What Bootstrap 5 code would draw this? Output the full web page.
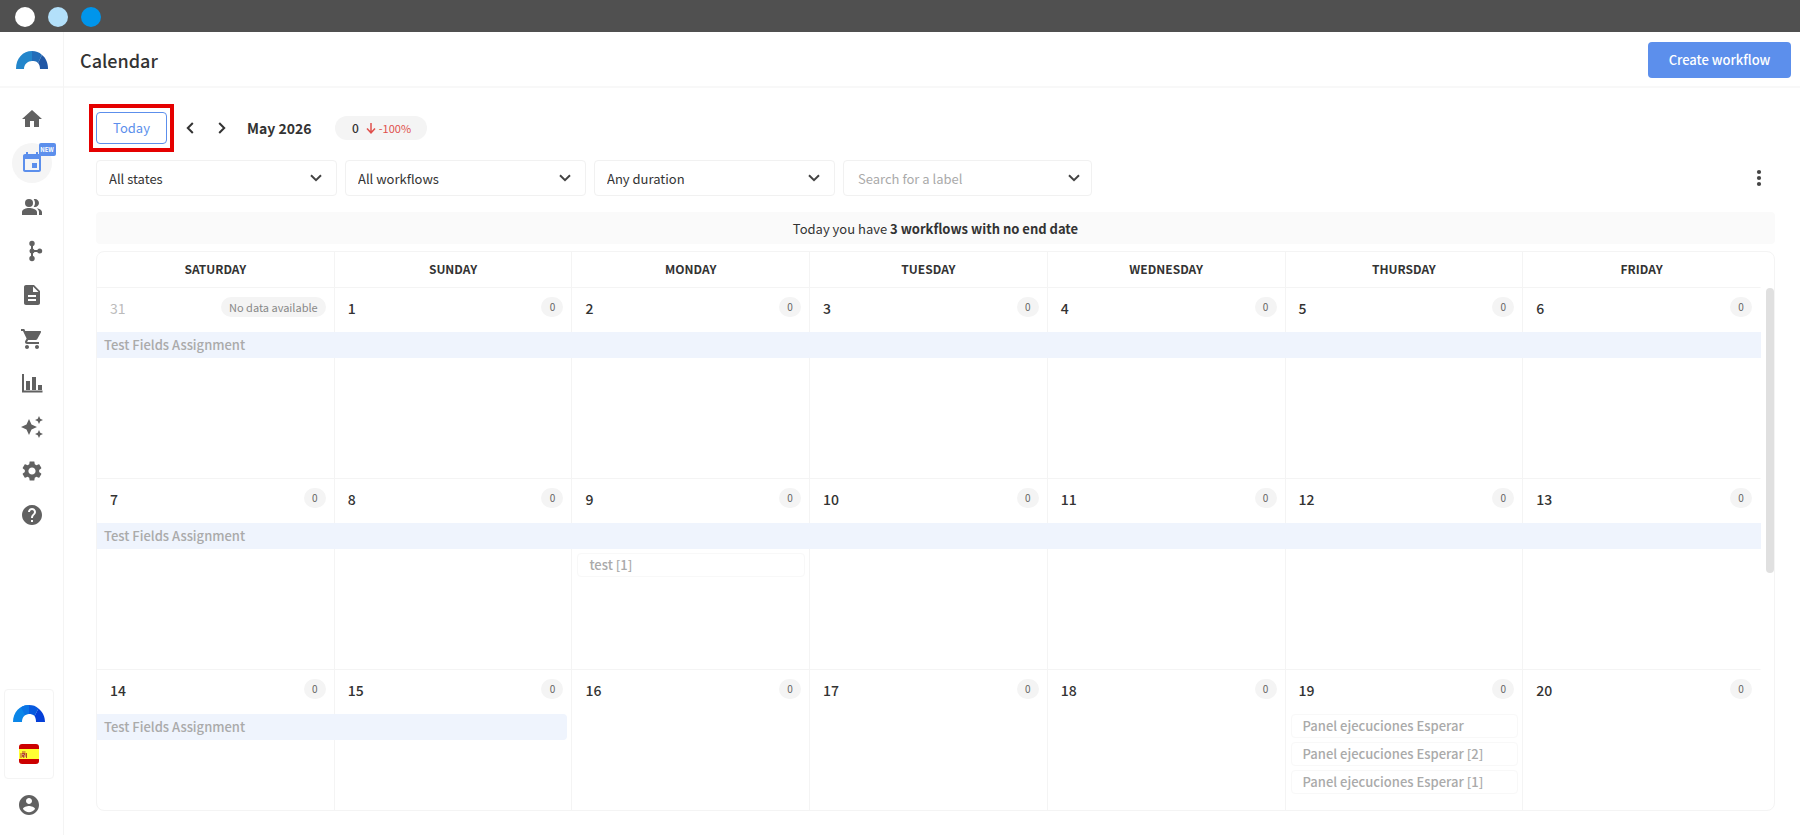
<!DOCTYPE html>
<html lang="en">
<head>
<meta charset="utf-8">
<meta name="viewport" content="width=device-width, initial-scale=1">
<title>Calendar</title>
<link rel="stylesheet" href="https://cdn.jsdelivr.net/npm/bootstrap@5.3.0/dist/css/bootstrap.min.css">
<style>
  :root { --line: #f4f4f4; --ink: #333; --brand: #5c8fec; --icon: #616161; }
  body { font-family: "Noto Sans CJK SC", "Noto Sans", sans-serif; font-size: 13px; line-height: 20px; color: var(--ink); background: #fff; }
  .window-bar { height: 32px; padding: 2px 0 0 15px; gap: 13px; background: #505050; }
  .dot { width: 20px; height: 20px; }
  .dot-white { background: #fff; }
  .dot-pale { background: #b3e0fa; }
  .dot-blue { background: #0095eb; }
  .side { width: 64px; border-right: 1px solid var(--line); }
  .side-logo { height: 56px; padding-top: 2px; border-bottom: 2px solid #f8f8f8; }
  .side-nav { padding-top: 11px; gap: 4px; }
  .side-link { width: 40px; height: 40px; color: var(--icon); }
  .side-link.active { color: var(--brand); background: #f5f5f5; }
  .tag-new { left: 27px; top: 0; width: 17px; height: 13px; border-radius: 2px; background: var(--brand); color: #fff; font-size: 6px; font-weight: 700; line-height: 13px; text-align: center; }
  .side-foot { padding: 0 10px 18px 4px; gap: 14px; }
  .locale { width: 50px; height: 90px; border: 1px solid var(--line); border-radius: 4px; padding-top: 15px; gap: 22px; }
  .account { color: var(--icon); }
  .topbar { height: 56px; border-bottom: 2px solid #f8f8f8; padding: 2px 9px 0 16px; }
  .page-title { font-size: 18px; line-height: 24px; font-weight: 500; }
  .btn-create { height: 36px; width: 143px; padding: 0; border-radius: 4px; font-size: 13px; font-weight: 500; color: #fff; background: var(--brand); }
  .content { padding: 16px 25px 24px; }
  .toolbar { height: 48px; }
  .highlight { border: 4px solid #e50000; padding: 4px 3px; }
  .btn-today { width: 71px; height: 32px; padding: 0; border: 1px solid var(--brand); border-radius: 4px; color: var(--brand); font-size: 13px; background: #fff; }
  .btn-step { width: 32px; height: 32px; padding: 0; border: 0; color: var(--ink); }
  .month { font-size: 14px; font-weight: 700; margin: 0 24px 0 9px; }
  .trend { height: 24px; width: 92px; border-radius: 12px; background: #f4f4f4; font-size: 12px; font-weight: 500; gap: 3px; }
  .trend-down { color: #e0504c; font-size: 11px; font-weight: 400; }
  .filters { margin: 8px 0 0 7px; gap: 8px; }
  .filter { width: 241px; height: 36px; padding: 2px 32px 0 12px; border: 1px solid #f1f1f1; border-radius: 4px; font-size: 13px; line-height: 20px; color: var(--ink);
    background: #fff url("data:image/svg+xml,%3Csvg xmlns='http://www.w3.org/2000/svg' viewBox='0 0 12 8'%3E%3Cpath d='M1 1.2l5 5 5-5' fill='none' stroke='%23444' stroke-width='2'/%3E%3C/svg%3E") no-repeat right 14px center / 12px 8px; }
  .filter-label { width: 249px; padding: 0 32px 0 14px; background-position: right 11px center; }
  .filter::placeholder { color: #aaa; opacity: 1; }
  .btn-more { width: 32px; height: 36px; padding: 0; border: 0; color: #444; }
  .notice { margin: 16px 0 7px 7px; height: 32px; line-height: 34px; border-radius: 4px; background: #fafafa; }
  .calendar { margin-left: 7px; border: 1px solid var(--line); border-radius: 8px; padding-right: 13px; min-height: 0; }
  .month-grid { table-layout: fixed; border-collapse: separate; border-spacing: 0; }
  .month-grid th, .month-grid td { border-bottom: 1px solid var(--line); border-right: 1px solid var(--line); padding: 0; vertical-align: top; }
  .month-grid th:last-child, .month-grid td:last-child { border-right-color: transparent; }
  .month-grid th { height: 36px; line-height: 34px; font-weight: 700; font-size: 12px; text-align: center; }
  .month-grid td { height: 191px; position: relative; }
  .day { height: 44px; padding: 9px 8px 0 13px; }
  .day-num { font-size: 14px; line-height: 22px; font-weight: 500; }
  .count { min-width: 22px; height: 20px; border-radius: 10px; padding: 0 8px; background: #f4f4f4; color: #666; font-size: 10px; text-align: center; }
  .day-out .day-num { color: #bbb; font-weight: 400; }
  .day-out .count { color: #888; font-size: 11px; }
  .span-event { top: 44px; left: 0; height: 26px; line-height: 26px; padding-left: 7px; background: #eff4fd; color: #aaa; font-weight: 500; z-index: 1; }
  .span-event.ends { border-radius: 0 4px 4px 0; }
  .event { height: 24px; margin: 0 4px 4px 5px; padding-left: 11px; line-height: 22px; border: 1px solid #f8f8f8; border-radius: 4px; color: #aaa; font-weight: 500; }
  .event.below { margin-top: 30px; }
  .thumb { top: 36px; right: 0; width: 8px; height: 285px; border-radius: 4px; background: #e0e0e0; }
</style>
</head>
<body class="vh-100 d-flex flex-column overflow-hidden">
<div class="window-bar d-flex align-items-center flex-shrink-0">
  <span class="dot dot-white rounded-circle"></span><span class="dot dot-pale rounded-circle"></span><span class="dot dot-blue rounded-circle"></span>
</div>
<div class="d-flex flex-grow-1 overflow-hidden">
  <aside class="side d-flex flex-column flex-shrink-0">
    <a href="#" class="side-logo d-flex align-items-center justify-content-center flex-shrink-0" aria-label="Home page">
      <svg width="32" height="18" viewBox="0 0 32 18"><path fill="#2386cb" d="M0 18C0 7 7 0 16 0v10c-4 0-8 3-8 8z"/><path fill="#226db9" d="M16 0c4 0 7 1 10 4l-4 8c-2-2-4-2-6-2z"/><path fill="#2057a5" d="M26 4c4 3 6 8 6 14h-8c0-3-1-5-2-6z"/></svg>
    </a>
    <nav class="side-nav d-flex flex-column align-items-center">
      <a href="#" class="side-link rounded-circle d-flex align-items-center justify-content-center" aria-label="Home"><svg width="24" height="24" viewBox="0 0 24 24" fill="currentColor"><path d="M10 20v-6h4v6h5v-8h3L12 3 2 12h3v8z"/></svg></a>
      <a href="#" class="side-link active rounded-circle d-flex align-items-center justify-content-center position-relative text-decoration-none" aria-label="Calendar"><svg width="24" height="24" viewBox="0 0 24 24" fill="currentColor"><path d="M17 12h-5v5h5v-5zM16 1v2H8V1H6v2H5c-1.110 0-1.990.9-1.990 2L3 19c0 1.100.89 2 2 2h14c1.100 0 2-.9 2-2V5c0-1.100-.9-2-2-2h-1V1h-2zm3 18H5V8h14v11z"/></svg><span class="tag-new position-absolute">NEW</span></a>
      <a href="#" class="side-link rounded-circle d-flex align-items-center justify-content-center" aria-label="Contacts"><svg width="24" height="24" viewBox="0 0 24 24" fill="currentColor"><path d="M16.670 13.130C18.040 14.060 19 15.320 19 17v3h3v-3c0-2.180-2.570-3.470-5.330-3.870z"/><circle cx="9" cy="8" r="4"/><path d="M15 12c2.210 0 4-1.790 4-4s-1.790-4-4-4c-.47 0-.91.1-1.330.24C14.500 5.270 15 6.580 15 8s-.5 2.730-1.330 3.760c.42.14.86.24 1.330.24zM9 13c-2.670 0-7 1.340-7 4v3h15v-3c0-2.660-5.330-4-8-4z"/></svg></a>
      <a href="#" class="side-link rounded-circle d-flex align-items-center justify-content-center" aria-label="Workflows"><svg width="24" height="24" viewBox="0 0 24 24" fill="currentColor"><path d="M11 4h2v16h-2z"/><path d="M12 11h8v2h-8z"/><circle cx="12" cy="4.500" r="2.700"/><circle cx="12" cy="12" r="2.500"/><circle cx="12" cy="19.500" r="2.700"/><circle cx="19.700" cy="12" r="2.500"/></svg></a>
      <a href="#" class="side-link rounded-circle d-flex align-items-center justify-content-center" aria-label="Documents"><svg width="24" height="24" viewBox="0 0 24 24" fill="currentColor"><path d="M14 2H6c-1.100 0-1.990.9-1.990 2L4 20c0 1.100.89 2 1.990 2H18c1.100 0 2-.9 2-2V8l-6-6zm2 16H8v-2h8v2zm0-4H8v-2h8v2zm-3-5V3.500L18.500 9H13z"/></svg></a>
      <a href="#" class="side-link rounded-circle d-flex align-items-center justify-content-center" aria-label="Orders"><svg width="24" height="24" viewBox="0 0 24 24" fill="currentColor"><path d="M7 18c-1.100 0-1.990.9-1.990 2S5.900 22 7 22s2-.9 2-2-.9-2-2-2zM1 2v2h2l3.600 7.590-1.350 2.450c-.16.28-.25.61-.25.96 0 1.100.9 2 2 2h12v-2H7.420c-.14 0-.25-.11-.25-.25l.03-.12.9-1.630h7.450c.75 0 1.410-.41 1.750-1.030l3.580-6.490A1 1 0 0 0 20 4H5.210l-.94-2H1zm16 16c-1.100 0-1.990.9-1.990 2s.89 2 1.990 2 2-.9 2-2-.9-2-2-2z"/></svg></a>
      <a href="#" class="side-link rounded-circle d-flex align-items-center justify-content-center" aria-label="Statistics"><svg width="24" height="24" viewBox="0 0 24 24" fill="currentColor"><path d="M2 3h2v16.500h18.500v2H2zM6 10h4v9H6zM12 6h4v13h-4zM18 14h4v5h-4z"/></svg></a>
      <a href="#" class="side-link rounded-circle d-flex align-items-center justify-content-center" aria-label="Assistant"><svg width="24" height="24" viewBox="0 0 24 24" fill="currentColor"><path d="M19 9l1.250-2.750L23 5l-2.750-1.250L19 1l-1.250 2.750L15 5l2.750 1.250L19 9zm-7.500.5L9 4 6.500 9.500 1 12l5.500 2.500L9 20l2.500-5.500L17 12l-5.500-2.500zM19 15l-1.250 2.750L15 19l2.750 1.250L19 23l1.250-2.750L23 19l-2.750-1.250L19 15z"/></svg></a>
      <a href="#" class="side-link rounded-circle d-flex align-items-center justify-content-center" aria-label="Settings"><svg width="24" height="24" viewBox="0 0 24 24" fill="currentColor"><path d="M19.140 12.940c.04-.3.060-.61.060-.94 0-.32-.02-.64-.07-.94l2.030-1.580c.18-.14.23-.41.12-.61l-1.920-3.320c-.12-.22-.37-.29-.59-.22l-2.390.96c-.5-.38-1.030-.7-1.620-.94l-.36-2.540c-.04-.24-.24-.41-.48-.41h-3.840c-.24 0-.43.17-.47.41l-.36 2.540c-.59.24-1.130.57-1.620.94l-2.390-.96c-.22-.08-.47 0-.59.22L2.740 8.870c-.12.21-.08.47.12.61l2.030 1.580c-.05.3-.09.63-.09.94s.02.64.07.94l-2.030 1.580c-.18.14-.23.41-.12.61l1.920 3.320c.12.22.37.29.59.22l2.390-.96c.5.38 1.030.7 1.620.94l.36 2.540c.05.24.24.41.48.41h3.840c.24 0 .44-.17.47-.41l.36-2.540c.59-.24 1.130-.56 1.620-.94l2.390.96c.22.08.47 0 .59-.22l1.920-3.320c.12-.22.07-.47-.12-.61l-2.010-1.580zM12 15.600c-1.980 0-3.600-1.620-3.600-3.600s1.620-3.600 3.600-3.600 3.600 1.620 3.600 3.600-1.620 3.600-3.600 3.600z"/></svg></a>
      <a href="#" class="side-link rounded-circle d-flex align-items-center justify-content-center" aria-label="Help"><svg width="24" height="24" viewBox="0 0 24 24" fill="currentColor"><path d="M12 2C6.480 2 2 6.480 2 12s4.480 10 10 10 10-4.480 10-10S17.520 2 12 2zm1 17h-2v-2h2v2zm2.070-7.750l-.9.920C13.450 12.900 13 13.500 13 15h-2v-.5c0-1.100.45-2.100 1.170-2.830l1.240-1.260c.37-.36.59-.86.59-1.410 0-1.100-.9-2-2-2s-2 .9-2 2H8c0-2.210 1.790-4 4-4s4 1.790 4 4c0 .88-.36 1.680-.93 2.250z"/></svg></a>
    </nav>
    <div class="side-foot d-flex flex-column align-items-center mt-auto">
      <div class="locale d-flex flex-column align-items-center">
        <svg width="32" height="17" viewBox="0 0 32 17"><path fill="#0b86e8" d="M0 17C0 7 7 0 16 0v9c-4 0-7 3-7 8z"/><path fill="#0a74e6" d="M8 2.300C10.500.8 13 0 16 0v9c-1.500 0-3 .5-4 1.300z"/><path fill="#0759df" d="M16 0c4 0 7 1 9.500 3.500L21.500 11C20 9.500 18 9 16 9z"/><path fill="#053fd8" d="M25.500 3.500C30 7 32 12 32 17h-9c0-2.500-.5-4.500-1.500-6z"/></svg>
        <svg width="20" height="20" viewBox="0 0 20 20"><defs><clipPath id="flagClip"><rect width="20" height="20" rx="3"/></clipPath></defs><g clip-path="url(#flagClip)"><path fill="#c00" d="M0 0h20v20H0z"/><path fill="#ff3" d="M0 5h20v10H0z"/><path fill="#b5452c" d="M1.500 9h1v5h-1zM7 9h1v5H7zM3 9h3.500v3.500L4.700 14 3 12.500zM3 7.500h3.500v1H3z"/><path fill="#e8d8c0" d="M3.500 10h1v1h-1zM5 11.500h1v1H5z"/></g></svg>
      </div>
      <a href="#" class="account d-flex" aria-label="Account"><svg width="24" height="24" viewBox="0 0 24 24" fill="currentColor"><path d="M12 2C6.480 2 2 6.480 2 12s4.480 10 10 10 10-4.480 10-10S17.520 2 12 2zm0 3c1.660 0 3 1.340 3 3s-1.340 3-3 3-3-1.340-3-3 1.340-3 3-3zm0 14.200c-2.500 0-4.710-1.280-6-3.220.03-1.990 4-3.080 6-3.080 1.990 0 5.970 1.090 6 3.080-1.290 1.940-3.500 3.220-6 3.220z"/></svg></a>
    </div>
  </aside>
  <div class="d-flex flex-column flex-grow-1 overflow-hidden">
    <header class="topbar d-flex align-items-center justify-content-between flex-shrink-0">
      <h1 class="page-title mb-0">Calendar</h1>
      <button type="button" class="btn btn-create">Create workflow</button>
    </header>
    <main class="content d-flex flex-column flex-grow-1 overflow-hidden">
      <div class="toolbar d-flex align-items-center flex-shrink-0">
        <div class="highlight"><button type="button" class="btn btn-today d-block">Today</button></div>
        <button type="button" class="btn btn-step d-flex align-items-center justify-content-center" aria-label="Previous month"><svg width="8" height="12" viewBox="0 0 8 12"><path d="M6.800 1L1.800 6l5 5" fill="none" stroke="currentColor" stroke-width="2"/></svg></button>
        <button type="button" class="btn btn-step d-flex align-items-center justify-content-center" aria-label="Next month"><svg width="8" height="12" viewBox="0 0 8 12"><path d="M1.200 1l5 5-5 5" fill="none" stroke="currentColor" stroke-width="2"/></svg></button>
        <span class="month">May 2026</span>
        <div class="trend d-flex align-items-center justify-content-center"><span>0</span><svg class="ms-1" width="10" height="11" viewBox="0 0 10 11"><path d="M5 0v10M1 5.500l4 4.300 4-4.300" fill="none" stroke="#e0504c" stroke-width="1.500"/></svg><span class="trend-down">-100%</span></div>
      </div>
      <div class="filters d-flex flex-shrink-0">
        <select class="filter form-select" aria-label="State"><option>All states</option></select>
        <select class="filter form-select" aria-label="Workflow"><option>All workflows</option></select>
        <select class="filter form-select" aria-label="Duration"><option>Any duration</option></select>
        <input type="text" class="filter filter-label form-control" placeholder="Search for a label" aria-label="Label">
        <button type="button" class="btn btn-more ms-auto d-flex align-items-center justify-content-center" aria-label="More options"><svg width="6" height="18" viewBox="0 0 6 18" fill="currentColor"><circle cx="3" cy="3" r="2.100"/><circle cx="3" cy="9" r="2.100"/><circle cx="3" cy="15" r="2.100"/></svg></button>
      </div>
      <div class="notice text-center flex-shrink-0">Today you have <strong>3 workflows with no end date</strong></div>
      <div class="calendar position-relative flex-grow-1 overflow-hidden">
        <table class="month-grid w-100">
          <thead><tr><th scope="col">SATURDAY</th><th scope="col">SUNDAY</th><th scope="col">MONDAY</th><th scope="col">TUESDAY</th><th scope="col">WEDNESDAY</th><th scope="col">THURSDAY</th><th scope="col">FRIDAY</th></tr></thead>
          <tbody>
            <tr>
              <td><div class="day day-out d-flex justify-content-between"><span class="day-num">31</span><span class="count">No data available</span></div><div class="span-event position-absolute" style="width:calc(700% + 7px)">Test Fields Assignment</div></td>
              <td><div class="day d-flex justify-content-between"><span class="day-num">1</span><span class="count">0</span></div></td>
              <td><div class="day d-flex justify-content-between"><span class="day-num">2</span><span class="count">0</span></div></td>
              <td><div class="day d-flex justify-content-between"><span class="day-num">3</span><span class="count">0</span></div></td>
              <td><div class="day d-flex justify-content-between"><span class="day-num">4</span><span class="count">0</span></div></td>
              <td><div class="day d-flex justify-content-between"><span class="day-num">5</span><span class="count">0</span></div></td>
              <td><div class="day d-flex justify-content-between"><span class="day-num">6</span><span class="count">0</span></div></td>
            </tr>
            <tr>
              <td><div class="day d-flex justify-content-between"><span class="day-num">7</span><span class="count">0</span></div><div class="span-event position-absolute" style="width:calc(700% + 7px)">Test Fields Assignment</div></td>
              <td><div class="day d-flex justify-content-between"><span class="day-num">8</span><span class="count">0</span></div></td>
              <td><div class="day d-flex justify-content-between"><span class="day-num">9</span><span class="count">0</span></div><div class="event below">test [1]</div></td>
              <td><div class="day d-flex justify-content-between"><span class="day-num">10</span><span class="count">0</span></div></td>
              <td><div class="day d-flex justify-content-between"><span class="day-num">11</span><span class="count">0</span></div></td>
              <td><div class="day d-flex justify-content-between"><span class="day-num">12</span><span class="count">0</span></div></td>
              <td><div class="day d-flex justify-content-between"><span class="day-num">13</span><span class="count">0</span></div></td>
            </tr>
            <tr>
              <td><div class="day d-flex justify-content-between"><span class="day-num">14</span><span class="count">0</span></div><div class="span-event ends position-absolute" style="width:calc(200% - 3px)">Test Fields Assignment</div></td>
              <td><div class="day d-flex justify-content-between"><span class="day-num">15</span><span class="count">0</span></div></td>
              <td><div class="day d-flex justify-content-between"><span class="day-num">16</span><span class="count">0</span></div></td>
              <td><div class="day d-flex justify-content-between"><span class="day-num">17</span><span class="count">0</span></div></td>
              <td><div class="day d-flex justify-content-between"><span class="day-num">18</span><span class="count">0</span></div></td>
              <td><div class="day d-flex justify-content-between"><span class="day-num">19</span><span class="count">0</span></div><div class="event">Panel ejecuciones Esperar</div><div class="event">Panel ejecuciones Esperar [2]</div><div class="event">Panel ejecuciones Esperar [1]</div></td>
              <td><div class="day d-flex justify-content-between"><span class="day-num">20</span><span class="count">0</span></div></td>
            </tr>
          </tbody>
        </table>
        <div class="thumb position-absolute"></div>
      </div>
    </main>
  </div>
</div>
<script src="https://cdn.jsdelivr.net/npm/bootstrap@5.3.0/dist/js/bootstrap.bundle.min.js"></script>
</body>
</html>
